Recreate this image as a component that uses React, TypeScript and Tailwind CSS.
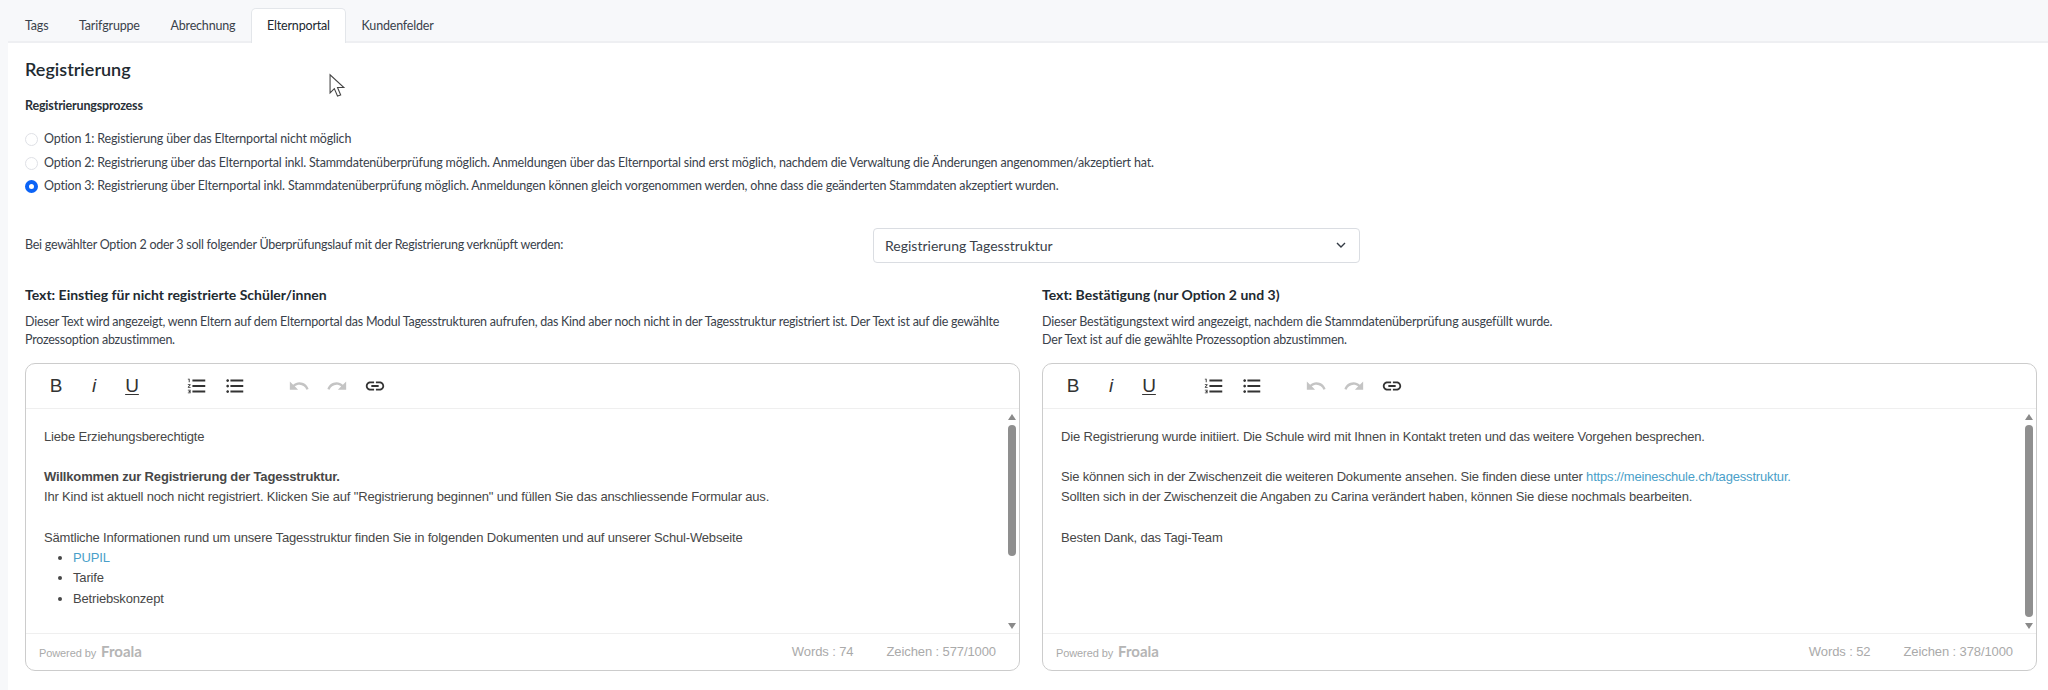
import type { ReactNode } from 'react';

const ui = "font-['Lato','Noto_Sans',sans-serif]";

const icons = {
    ol: 'M2 17h2v.5H3v1h1v.5H2v1h3v-4H2zm1-9h1V4H2v1h1v3zm-1 3h1.8L2 13.1v.9h3v-1H3.2L5 10.9V10H2v1zm5-6v2h14V5H7zm0 14h14v-2H7v2zm0-6h14v-2H7v2z',
    ul: 'M4 10.5c-.83 0-1.5.67-1.5 1.5s.67 1.5 1.5 1.5 1.5-.67 1.5-1.5-.67-1.5-1.5-1.5zm0-6c-.83 0-1.5.67-1.5 1.5S3.17 7.5 4 7.5 5.5 6.83 5.5 6 4.83 4.5 4 4.5zm0 12c-.83 0-1.5.68-1.5 1.5s.68 1.5 1.5 1.5 1.5-.68 1.5-1.5-.67-1.5-1.5-1.5zM7 19h14v-2H7v2zm0-6h14v-2H7v2zm0-8v2h14V5H7z',
    undo: 'M12.5 8c-2.65 0-5.05.99-6.9 2.6L2 7v9h9l-3.62-3.62c1.39-1.16 3.16-1.88 5.12-1.88 3.54 0 6.55 2.31 7.6 5.5l2.37-.78C21.08 11.03 17.15 8 12.5 8z',
    redo: 'M18.4 10.6C16.55 8.99 14.15 8 11.5 8c-4.65 0-8.58 3.03-9.96 7.22L3.9 16c1.05-3.19 4.05-5.5 7.6-5.5 1.95 0 3.73.72 5.12 1.88L13 16h9V7l-3.6 3.6z',
    link: 'M3.9 12c0-1.71 1.39-3.1 3.1-3.1h4V7H7c-2.76 0-5 2.24-5 5s2.24 5 5 5h4v-1.9H7c-1.71 0-3.1-1.39-3.1-3.1zM8 13h8v-2H8v2zm9-6h-4v1.9h4c1.71 0 3.1 1.39 3.1 3.1s-1.39 3.1-3.1 3.1h-4V17h4c2.76 0 5-2.24 5-5s-2.24-5-5-5z',
};

function ToolIcon({ d, disabled }: { d: string; disabled?: boolean }) {
    return (
        <span className="w-[38px] flex justify-center">
            <svg
                viewBox="0 0 24 24"
                className={`w-[22px] h-[22px] ${disabled ? 'fill-[#c4c4c4]' : 'fill-[#333333]'}`}
            >
                <path d={d} />
            </svg>
        </span>
    );
}

function Toolbar() {
    return (
        <div className="h-[44px] mx-[1px] pl-[10px] flex items-center text-[#333333] font-['Liberation_Sans',sans-serif] text-[19px] leading-none tracking-normal">
            <span className="w-[38px] text-center">B</span>
            <span className="w-[38px] text-center italic">i</span>
            <span className="w-[38px] text-center underline underline-offset-2">U</span>
            <span className="w-[27px]" />
            <ToolIcon d={icons.ol} />
            <ToolIcon d={icons.ul} />
            <span className="w-[26px]" />
            <ToolIcon d={icons.undo} disabled />
            <ToolIcon d={icons.redo} disabled />
            <ToolIcon d={icons.link} />
        </div>
    );
}

function ScrollBar({ thumb }: { thumb: string }) {
    return (
        <div className="absolute right-[2px] top-0 bottom-0 w-[10px] flex flex-col items-center">
            <span className="mt-[5px] w-0 h-0 border-x-[4px] border-x-transparent border-b-[6px] border-b-[#8a8a8a]" />
            <span className={`mt-[5px] w-[8px] rounded-full bg-[#8f8f8f] ${thumb}`} />
            <span className="mt-auto mb-[4px] w-0 h-0 border-x-[4px] border-x-transparent border-t-[6px] border-t-[#8a8a8a]" />
        </div>
    );
}

function Editor({
    children,
    words,
    chars,
    thumb,
}: {
    children: ReactNode;
    words: number;
    chars: string;
    thumb: string;
}) {
    return (
        <div className="h-[308px] rounded-[10px] border border-[#cccccc] flex flex-col">
            <Toolbar />
            <div className="relative flex-1 border-t border-[#efefef] pt-[18px] pl-[18px] font-['Liberation_Sans',sans-serif] text-[13px] leading-[20.25px] tracking-[-0.17px] text-[#474747]">
                {children}
                <ScrollBar thumb={thumb} />
            </div>
            <div className="h-[37px] border-t border-[#efefef] flex items-center justify-between pl-[13px] pr-[23px] font-['Liberation_Sans',sans-serif] text-[#aaaaaa] tracking-[-0.1px]">
                <span className="flex items-baseline gap-[5px] text-[11px]">
                    Powered by
                    <span className={`${ui} text-[15px] font-bold text-[#b5b5b5] tracking-normal`}>Froala</span>
                </span>
                <span className="flex gap-[33px] text-[13px]">
                    <span>Words : {words}</span>
                    <span>Zeichen : {chars}</span>
                </span>
            </div>
        </div>
    );
}

function Radio({ label, checked }: { label: string; checked?: boolean }) {
    return (
        <label className="h-[23.5px] flex items-center gap-[6px]">
            <span
                className={`w-[13px] h-[13px] rounded-full bg-white ${
                    checked ? 'border-[4px] border-[#0b63f6]' : 'border border-[#dfe1e6]'
                }`}
            />
            {label}
        </label>
    );
}

const tabs = ['Tags', 'Tarifgruppe', 'Abrechnung', 'Elternportal', 'Kundenfelder'];

export default function App() {
    return (
        <div className={`${ui} w-[2048px] h-[690px] overflow-hidden bg-[#f7f8fa] text-[12.5px] tracking-[-0.18px] text-[#3a424b] relative`}>
            <div className="h-[41px] pt-[8px] pl-[10px] flex gap-[0.7px]">
                {tabs.map((tab) => (
                    <div
                        key={tab}
                        className={`px-[15px] pt-[1px] flex items-center h-[35px] relative ${
                            tab === 'Elternportal'
                                ? 'bg-white rounded-t-[5px] border border-b-0 border-[#e3e6ea] text-[#212830]'
                                : ''
                        }`}
                    >
                        {tab}
                    </div>
                ))}
            </div>
            <div className="ml-[8px] h-[649px] bg-white border-t-2 border-[#eeeff2] pl-[17px] pr-[11px]">
                <h2 className="mt-[14px] text-[18px] leading-[24px] font-semibold tracking-normal text-[#222a31]">Registrierung</h2>
                <p className="mt-[16px] leading-[18px] font-bold text-[#2a3138]">Registrierungsprozess</p>
                <div className="mt-[13px]">
                    <Radio label="Option 1: Registierung über das Elternportal nicht möglich" />
                    <Radio label="Option 2: Registrierung über das Elternportal inkl. Stammdatenüberprüfung möglich. Anmeldungen über das Elternportal sind erst möglich, nachdem die Verwaltung die Änderungen angenommen/akzeptiert hat." />
                    <Radio checked label="Option 3: Registrierung über Elternportal inkl. Stammdatenüberprüfung möglich. Anmeldungen können gleich vorgenommen werden, ohne dass die geänderten Stammdaten akzeptiert wurden." />
                </div>
                <div className="mt-[29px] flex items-center">
                    <span className="w-[848px] tracking-[-0.25px]">Bei gewählter Option 2 oder 3 soll folgender Überprüfungslauf mit der Registrierung verknüpft werden:</span>
                    <div className="w-[487px] h-[35px] rounded-[4px] border border-[#dadde2] px-[11px] flex items-center justify-between text-[14px] tracking-normal">
                        Registrierung Tagesstruktur
                        <svg viewBox="0 0 12 12" className="w-[12px] h-[12px] mr-[1px] fill-none stroke-[#333b44] stroke-[1.4]">
                            <path d="M2 4l4 4 4-4" />
                        </svg>
                    </div>
                </div>
                <div className="mt-[22px] grid grid-cols-2 gap-x-[22px]">
                    <div>
                        <h3 className="text-[14px] leading-[20px] font-bold tracking-normal text-[#222a31]">Text: Einstieg für nicht registrierte Schüler/innen</h3>
                        <p className="mt-[8px] h-[50px] leading-[18.5px] tracking-[-0.24px]">
                            Dieser Text wird angezeigt, wenn Eltern auf dem Elternportal das Modul Tagesstrukturen aufrufen, das Kind aber noch nicht in der Tagesstruktur registriert ist. Der Text ist auf die gewählte Prozessoption abzustimmen.
                        </p>
                        <Editor words={74} chars="577/1000" thumb="h-[131px]">
                            <p>Liebe Erziehungsberechtigte</p>
                            <p className="mt-[20.25px] font-bold">Willkommen zur Registrierung der Tagesstruktur.</p>
                            <p>Ihr Kind ist aktuell noch nicht registriert. Klicken Sie auf "Registrierung beginnen" und füllen Sie das anschliessende Formular aus.</p>
                            <p className="mt-[20.25px]">Sämtliche Informationen rund um unsere Tagesstruktur finden Sie in folgenden Dokumenten und auf unserer Schul-Webseite</p>
                            <ul className="list-disc pl-[29px]">
                                <li>
                                    <span className="text-[#4a9fc9]">PUPIL</span>
                                </li>
                                <li>Tarife</li>
                                <li>Betriebskonzept</li>
                            </ul>
                        </Editor>
                    </div>
                    <div>
                        <h3 className="text-[14px] leading-[20px] font-bold tracking-normal text-[#222a31]">Text: Bestätigung (nur Option 2 und 3)</h3>
                        <p className="mt-[8px] h-[50px] leading-[18.5px]">
                            Dieser Bestätigungstext wird angezeigt, nachdem die Stammdatenüberprüfung ausgefüllt wurde.
                            <br />
                            Der Text ist auf die gewählte Prozessoption abzustimmen.
                        </p>
                        <Editor words={52} chars="378/1000" thumb="h-[192px]">
                            <p>Die Registrierung wurde initiiert. Die Schule wird mit Ihnen in Kontakt treten und das weitere Vorgehen besprechen.</p>
                            <p className="mt-[20.25px]">
                                Sie können sich in der Zwischenzeit die weiteren Dokumente ansehen. Sie finden diese unter{' '}
                                <span className="text-[#4a9fc9]">https://meineschule.ch/tagesstruktur.</span>
                            </p>
                            <p>Sollten sich in der Zwischenzeit die Angaben zu Carina verändert haben, können Sie diese nochmals bearbeiten.</p>
                            <p className="mt-[20.25px]">Besten Dank, das Tagi-Team</p>
                        </Editor>
                    </div>
                </div>
            </div>
            {/* mouse pointer from the capture */}
            <svg viewBox="0 0 16 24" className="absolute left-[329px] top-[73px] w-[17px] h-[27px] fill-white stroke-[#444444]">
                <path d="M1 1v17l4-4 3 7 3-1-3-7h6z" />
            </svg>
        </div>
    );
}
